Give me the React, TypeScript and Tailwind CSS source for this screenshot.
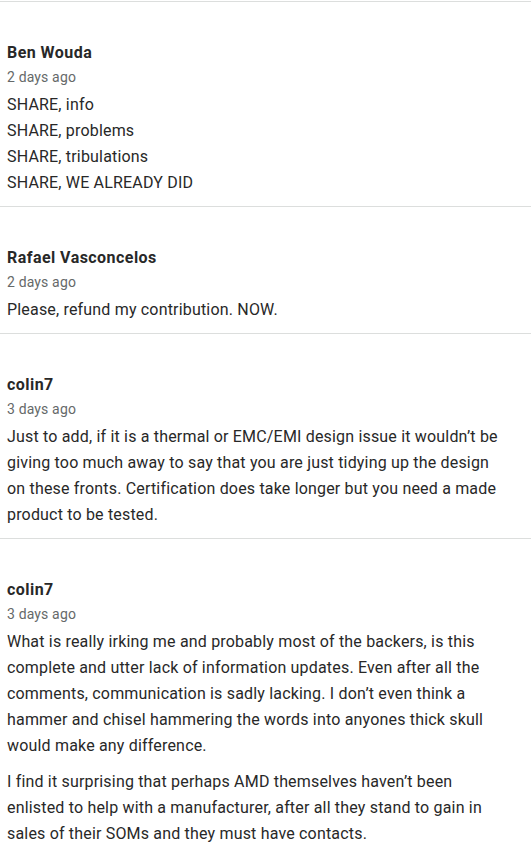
import React from 'react';

interface Comment {
    id: number;
    author: string;
    time: string;
    paragraphs: string[][];
}

const comments: Comment[] = [
    {
        id: 1,
        author: 'Ben Wouda',
        time: '2 days ago',
        paragraphs: [['SHARE, info', 'SHARE, problems', 'SHARE, tribulations', 'SHARE, WE ALREADY DID']],
    },
    {
        id: 2,
        author: 'Rafael Vasconcelos',
        time: '2 days ago',
        paragraphs: [['Please, refund my contribution. NOW.']],
    },
    {
        id: 3,
        author: 'colin7',
        time: '3 days ago',
        paragraphs: [
            [
                'Just to add, if it is a thermal or EMC/EMI design issue it wouldn\u2019t be giving too much away to say that you are just tidying up the design on these fronts. Certification does take longer but you need a made product to be tested.',
            ],
        ],
    },
    {
        id: 4,
        author: 'colin7',
        time: '3 days ago',
        paragraphs: [
            [
                'What is really irking me and probably most of the backers, is this complete and utter lack of information updates. Even after all the comments, communication is sadly lacking. I don\u2019t even think a hammer and chisel hammering the words into anyones thick skull would make any difference.',
            ],
            [
                'I find it surprising that perhaps AMD themselves haven\u2019t been enlisted to help with a manufacturer, after all they stand to gain in sales of their SOMs and they must have contacts.',
            ],
        ],
    },
];

export default function App() {
    return (
        <div className="min-h-screen bg-white pt-px font-['Roboto',sans-serif] text-[#282828]">
            {comments.map((c) => (
                <div key={c.id} className="border-t border-[#dcdedd] pl-[7px] pr-[22px] pt-[39px] pb-[10px]">
                    <h4 className="text-[16px] leading-[24px] font-bold tracking-[0.45px] text-[#282828]">{c.author}</h4>
                    <div className="text-[14px] leading-[24px] tracking-[0.15px] text-[#656969]">{c.time}</div>
                    <div className="mt-[3px] flex flex-col gap-[10px]">
                        {c.paragraphs.map((p, i) => (
                            <p key={i} className="text-[16px] leading-[26px] tracking-[0.18px]">
                                {p.map((line, j) => (
                                    <span key={j} className={p.length > 1 ? 'block' : ''}>
                                        {line}
                                    </span>
                                ))}
                            </p>
                        ))}
                    </div>
                </div>
            ))}
        </div>
    );
}
